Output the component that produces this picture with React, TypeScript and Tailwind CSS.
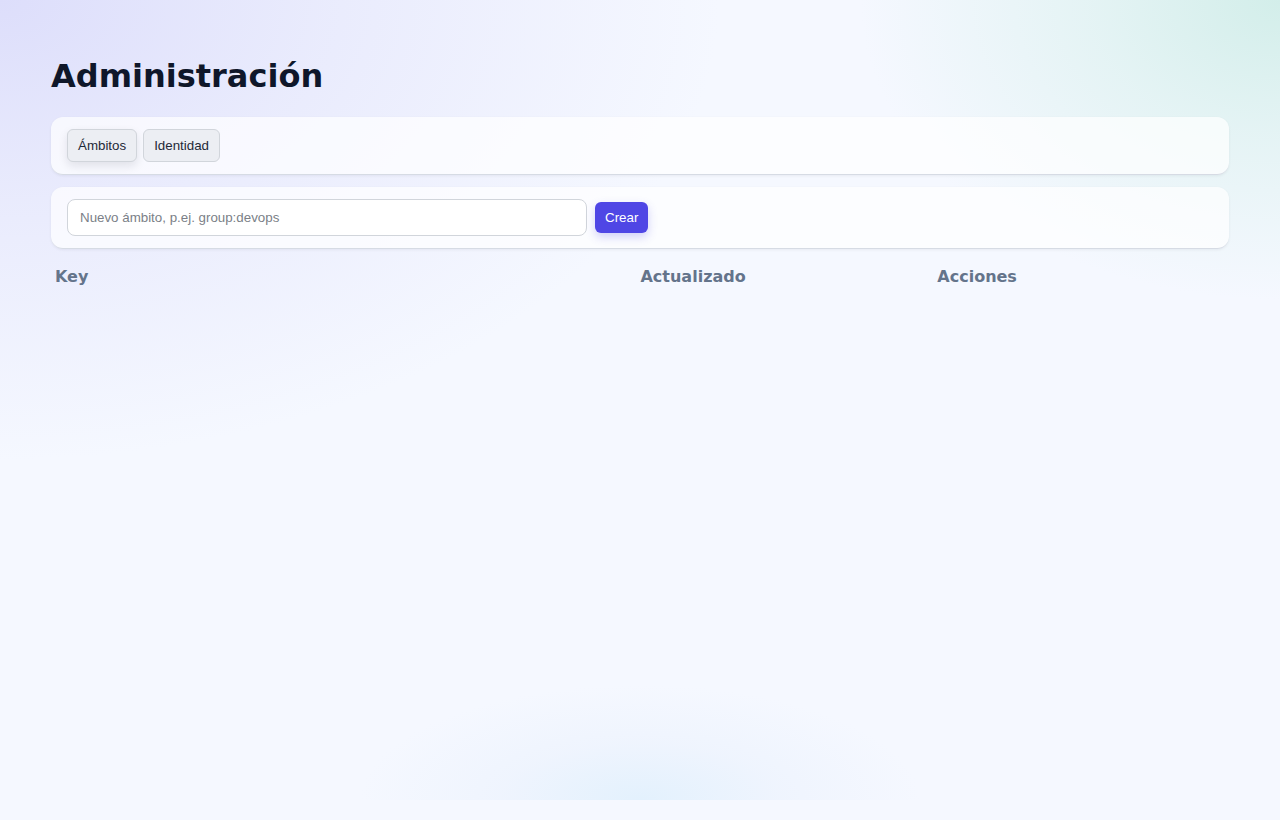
import React from 'react'

const App = () => {
  return (
    <div className="relative min-h-[820px] bg-[#f5f8ff] overflow-hidden font-['DejaVu_Sans',sans-serif]">
      {/* fondo */}
      <div className="absolute inset-x-0 top-0 h-[800px] bg-[radial-gradient(ellipse_720px_460px_at_0%_0%,#dddefb_0%,rgba(224,225,251,0.55)_45%,rgba(245,248,255,0)_100%),radial-gradient(ellipse_420px_300px_at_100%_0%,#d3eeea_0%,rgba(212,239,234,0.5)_45%,rgba(245,248,255,0)_100%),radial-gradient(ellipse_280px_115px_at_50%_100%,#e3f1fd_0%,rgba(235,242,253,0.6)_50%,rgba(245,248,255,0)_100%)]"></div>

      <div className="relative px-[51px] pt-[52px]">
        <h1 className="text-[32px] leading-[48px] font-bold text-[#0f172a]">Administración</h1>

        {/* pestañas */}
        <div className="mt-[17px] rounded-xl bg-white/70 border-b border-[#d6dbe4] shadow-[0_1px_3px_rgba(15,23,42,0.06)] px-4 py-3 flex gap-[6px] font-['Liberation_Sans',Arial,sans-serif]">
          <button className="h-[33px] px-[10px] rounded-md border border-[#d1d5db] bg-[#eceef3] text-[13.33px] text-[#1f2937] shadow-[0_4px_10px_rgba(15,23,42,0.10)]">
            Ámbitos
          </button>
          <button className="h-[33px] px-[10px] rounded-md border border-[#d1d5db] bg-[#eceef3] text-[13.33px] text-[#1f2937]">
            Identidad
          </button>
        </div>

        {/* crear ámbito */}
        <div className="mt-[12px] rounded-xl bg-white/70 border-b border-[#d6dbe4] shadow-[0_1px_3px_rgba(15,23,42,0.06)] px-4 py-3 flex items-center gap-2 font-['Liberation_Sans',Arial,sans-serif]">
          <input
            className="w-[520px] h-[37px] rounded-lg border border-[#d1d5db] bg-white px-3 text-[13.33px] text-[#1f2937] placeholder:text-[#7b7f87] outline-none"
            placeholder="Nuevo ámbito, p.ej. group:devops"
          />
          <button className="h-[31px] px-[10px] rounded-md bg-[#4f46e5] text-white text-[13.33px] shadow-[0_4px_10px_rgba(79,70,229,0.25)]">
            Crear
          </button>
        </div>

        {/* tabla */}
        <table className="mt-[12px] w-full border-collapse">
          <thead>
            <tr className="text-left text-[16px] font-bold text-[#64748b]">
              <th className="w-[49.7%] px-1 pt-[4px] pb-[8px]">Key</th>
              <th className="w-[25.2%] px-1 pt-[4px] pb-[8px]">Actualizado</th>
              <th className="px-1 pt-[4px] pb-[8px]">Acciones</th>
            </tr>
          </thead>
          <tbody></tbody>
        </table>
      </div>
    </div>
  )
}

export default App
